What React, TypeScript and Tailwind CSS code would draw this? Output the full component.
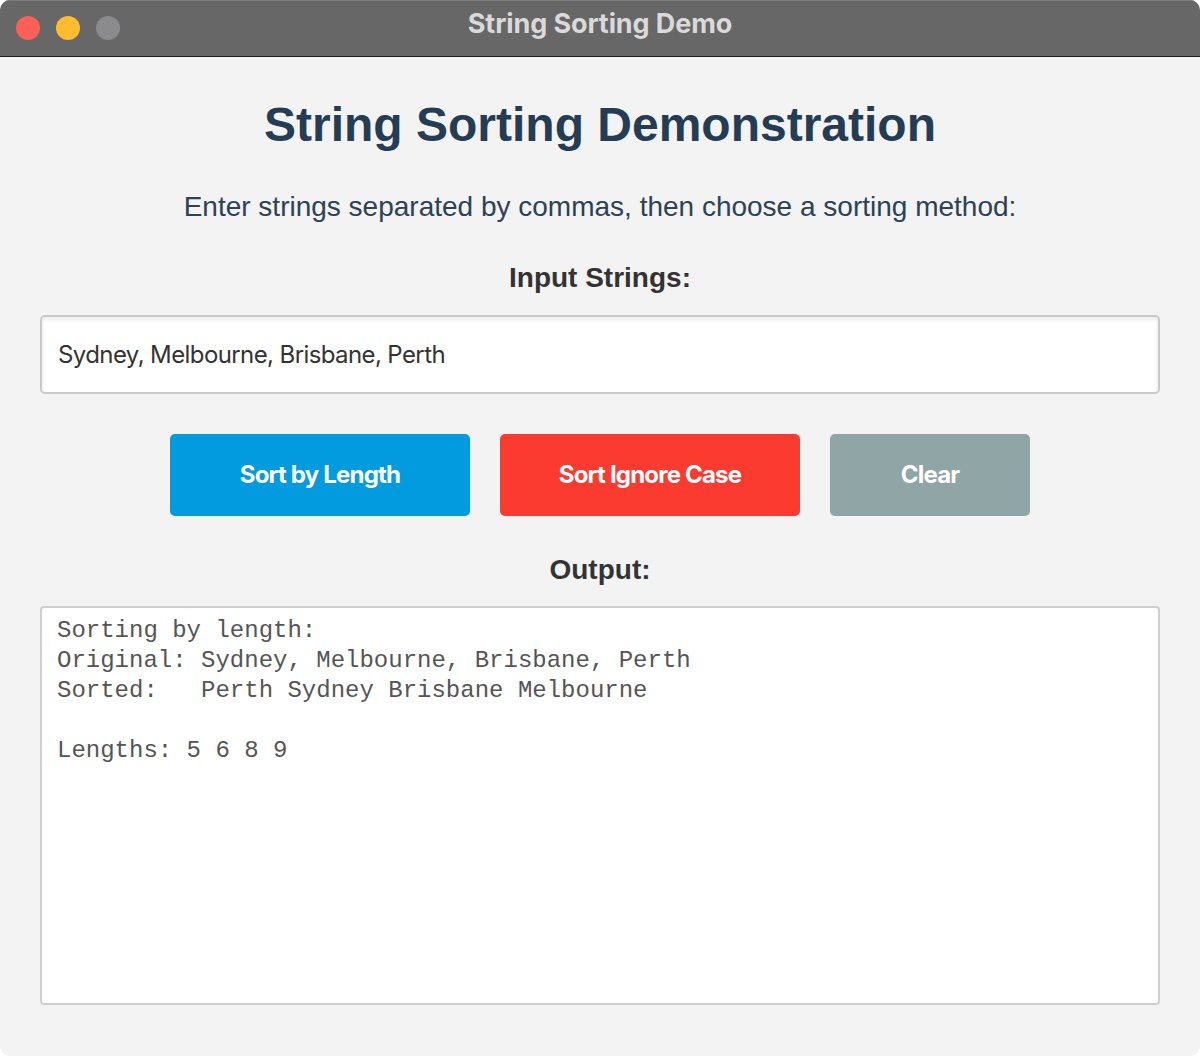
import React from "react";

export default function App() {
  const sans = { fontFamily: '"Liberation Sans", Arial, sans-serif' };
  const sys = { fontFamily: 'Inter, "Noto Sans", sans-serif' };
  const mono = { fontFamily: '"Liberation Mono", "Courier New", monospace' };
  return (
    <div className="w-[1200px] h-[1056px] bg-white">
      <div className="w-[1200px] h-[1056px] rounded-[10px] overflow-hidden bg-[#f3f3f3] flex flex-col">
        <div className="relative h-[57px] bg-[#676767] border-b border-[#1e1e1e] border-t border-t-[#7c7c7c] flex items-center justify-center shrink-0">
          <div className="absolute left-[16px] top-[15px] flex gap-[16px]">
            <div className="w-[24px] h-[24px] rounded-full bg-[#fe5f57]" />
            <div className="w-[24px] h-[24px] rounded-full bg-[#febc2e]" />
            <div className="w-[24px] h-[24px] rounded-full bg-[#8b8b8d]" />
          </div>
          <div className="text-[27px] font-bold text-[#dadada] tracking-[-0.1px] -mt-[8px]" style={sys}>
            String Sorting Demo
          </div>
        </div>
        <div className="flex flex-col items-center px-[40px]" style={sans}>
          <div className="mt-[40px] h-[56px] leading-[56px] text-[48px] font-bold text-[#253d54]">
            String Sorting Demonstration
          </div>
          <div className="mt-[37px] h-[34px] leading-[34px] text-[28px] text-[#2c4256]">
            Enter strings separated by commas, then choose a sorting method:
          </div>
          <div className="mt-[37px] h-[34px] leading-[34px] text-[28px] font-bold text-[#333333]">
            Input Strings:
          </div>
          <div
            className="mt-[20px] w-[1120px] h-[79px] bg-white border-2 border-[#c9c9c9] rounded-[5px] shadow-[inset_0_3px_4px_rgba(0,0,0,0.08)] flex items-center pl-[16px] text-[24px] tracking-[-0.6px] text-[#333333]"
            style={sys}
          >
            Sydney, Melbourne, Brisbane, Perth
          </div>
          <div className="mt-[40px] flex gap-[30px]" style={sys}>
            <div className="w-[300px] h-[82px] rounded-[5px] bg-[#039be0] flex items-center justify-center text-white text-[24px] font-bold tracking-[-0.8px]">
              Sort by Length
            </div>
            <div className="w-[300px] h-[82px] rounded-[5px] bg-[#fc3b30] flex items-center justify-center text-white text-[24px] font-bold tracking-[-0.8px]">
              Sort Ignore Case
            </div>
            <div className="w-[200px] h-[82px] rounded-[5px] bg-[#90a5a6] flex items-center justify-center text-white text-[24px] font-bold tracking-[-0.8px]">
              Clear
            </div>
          </div>
          <div className="mt-[37px] h-[34px] leading-[34px] text-[28px] font-bold text-[#333333]">
            Output:
          </div>
          <div
            className="mt-[19px] w-[1120px] h-[399px] bg-white border-2 border-[#cfcfcf] rounded-[4px] pl-[15px] pt-[8px] text-[24px] leading-[30px] text-[#555555] whitespace-pre"
            style={mono}
          >
            {"Sorting by length:\nOriginal: Sydney, Melbourne, Brisbane, Perth\nSorted:   Perth Sydney Brisbane Melbourne\n\nLengths: 5 6 8 9"}
          </div>
        </div>
      </div>
    </div>
  );
}
